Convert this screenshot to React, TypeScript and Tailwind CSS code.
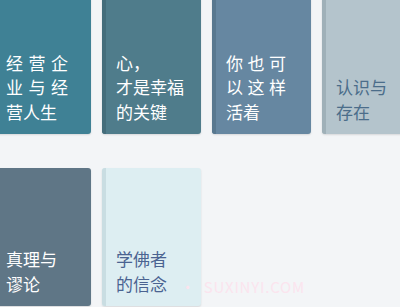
import React from 'react';

type Book = {
  lines: string[];
  bg: string;
  spine: string;
  text: string;
  spread?: string;
};

const books: Book[] = [
  { lines: ['经营企', '业与经', '营人生'], bg: 'bg-[#3f8195]', spine: 'bg-[#367384]', text: 'text-white', spread: 'w-[62px]' },
  { lines: ['心，', '才是幸福', '的关键'], bg: 'bg-[#4f7c8b]', spine: 'bg-[#446d7b]', text: 'text-white' },
  { lines: ['你也可', '以这样', '活着'], bg: 'bg-[#6687a1]', spine: 'bg-[#58788f]', text: 'text-white', spread: 'w-[60px]' },
  { lines: ['认识与', '存在'], bg: 'bg-[#b4c4cc]', spine: 'bg-[#9fb0b8]', text: 'text-[#4b6d8a]' },
  { lines: ['真理与', '谬论'], bg: 'bg-[#5f7686]', spine: 'bg-[#546a79]', text: 'text-white' },
  { lines: ['学佛者', '的信念'], bg: 'bg-[#ddeef2]', spine: 'bg-[#c9dde2]', text: 'text-[#4a6391]' },
];

function BookCard({ book }: { book: Book }) {
  return (
    <div className={`relative flex h-[138px] w-[99px] rounded-[3px] overflow-hidden shadow-[0_1px_2px_rgba(0,0,0,0.12)] ${book.bg}`}>
      {/* spine */}
      <div className={`w-[4px] shrink-0 ${book.spine}`}></div>
      <div className={`flex flex-1 flex-col justify-end pl-[10px] pb-[10px] text-[17px] leading-[24.5px] ${book.text}`}>
        {book.lines.map((line, i) => {
          const spread = book.spread && i < book.lines.length - 1;
          return (
            <div
              key={i}
              className={spread ? `${book.spread} text-justify [text-align-last:justify]` : ''}
            >
              {line}
            </div>
          );
        })}
      </div>
    </div>
  );
}

export default function App() {
  return (
    <div
      className="relative h-[307px] w-[400px] overflow-hidden bg-[#f3f5f7]"
      style={{ fontFamily: '"Noto Sans CJK SC", "Noto Sans", sans-serif' }}
    >
      <div className="-ml-[8px] -mt-[4px] grid grid-cols-[repeat(4,99px)] gap-x-[11px] gap-y-[34px]">
        {books.map((b, i) => (
          <BookCard key={i} book={b} />
        ))}
      </div>

      {/* watermark */}
      <div className="pointer-events-none absolute left-[180px] top-[278px] flex gap-[8px] text-[15px] leading-[18px] tracking-[0.8px] text-[#fbe4ee]">
        <span>·</span>
        <span>SUXINYI.COM</span>
      </div>
    </div>
  );
}
